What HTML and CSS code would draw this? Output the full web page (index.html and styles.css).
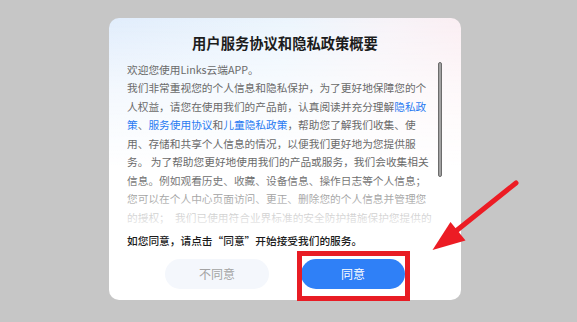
FILE: index.html
```html
<!DOCTYPE html>
<html lang="zh-CN">
<head>
<meta charset="utf-8">
<title>用户服务协议和隐私政策概要</title>
<link rel="stylesheet" href="styles.css">
</head>
<body>
<div class="stage">
  <div class="dialog">
    <h1 class="title">用户服务协议和隐私政策概要</h1>
    <div class="scroll">
      <p class="para">欢迎您使用Links云端APP。</p>
      <p class="para">我们非常重视您的个人信息和隐私保护，为了更好地保障您的个人权益，请您在使用我们的产品前，认真阅读并充分理解<a class="link">隐私政策</a>、<a class="link">服务使用协议</a>和<a class="link">儿童隐私政策</a>，帮助您了解我们收集、使用、存储和共享个人信息的情况，以便我们更好地为您提供服务。 为了帮助您更好地使用我们的产品或服务，我们会收集相关信息。例如观看历史、收藏、设备信息、操作日志等个人信息；您可以在个人中心页面访问、更正、删除您的个人信息并管理您的授权；　我们已使用符合业界标准的安全防护措施保护您提供的个人信息，防止数据遭到未经授权的访问、公开披露、使用、修改、损坏或丢失。</p>
      <div class="fade"></div>
    </div>
    <div class="scrollbar"></div>
    <p class="agree-note">如您同意，请点击“同意”开始接受我们的服务。</p>
    <div class="actions">
      <button class="btn btn-decline">不同意</button>
      <button class="btn btn-accept">同意</button>
    </div>
  </div>
  <div class="highlight"></div>
  <svg class="arrow" width="577" height="322" viewBox="0 0 577 322">
    <line x1="516" y1="183" x2="456" y2="231" stroke="#ec1c24" stroke-width="5" stroke-linecap="round"/>
    <polygon points="432.5,250 450.5,222 465.5,240.5" fill="#ec1c24"/>
  </svg>
</div>
</body>
</html>
```
FILE: styles.css
```css
* { box-sizing: border-box; }
html, body { margin: 0; padding: 0; }
body {
  background: #c6c6c6;
  font-family: "Noto Sans CJK SC", "Noto Sans", sans-serif;
  width: 577px;
  height: 322px;
  overflow: hidden;
}
.stage {
  position: relative;
  width: 577px;
  height: 322px;
  padding: 18px 0 0 109px;
}
.dialog {
  position: relative;
  width: 352px;
  border-radius: 10px;
  padding: 15px 18px 11.5px 18px;
  background:
    linear-gradient(to bottom, rgba(255,255,255,0) 0px, rgba(255,255,255,0.6) 70px, #fff 150px),
    linear-gradient(100deg, #e1edfc 0%, #ecf5fd 45%, #f7f3f8 70%, #fdebef 100%);
  display: flex;
  flex-direction: column;
}
.title {
  margin: 0;
  font-size: 14.3px;
  line-height: 20px;
  font-weight: 600;
  color: #1c1c1c;
  text-align: center;
}
.scroll {
  position: relative;
  margin-top: 7.75px;
  height: 167px;
  overflow: hidden;
  padding-right: 7px;
}
.para {
  margin: 0;
  font-size: 10.7px;
  line-height: 18.5px;
  color: #6a6a6a;
}
.link {
  color: #2a7bf2;
}
.fade {
  position: absolute;
  left: 0;
  right: 0;
  bottom: 0;
  height: 52px;
  background: linear-gradient(to bottom, rgba(255,255,255,0) 0%, rgba(255,255,255,0.55) 55%, rgba(255,255,255,0.9) 100%);
}
.scrollbar {
  position: absolute;
  left: 328.5px;
  top: 44px;
  width: 4.5px;
  height: 115px;
  border-radius: 3px;
  background: #a2a2a2;
  border: 1px solid #6c6c6c;
}
.agree-note {
  margin: 3.75px 0 0 0;
  font-size: 10.7px;
  line-height: 18.5px;
  color: #1a1a1a;
  font-weight: 500;
}
.actions {
  margin-top: 8.75px;
  display: flex;
  justify-content: center;
  gap: 32px;
}
.btn {
  width: 104px;
  height: 30px;
  border: none;
  border-radius: 15px;
  font-family: "Noto Sans CJK SC", "Noto Sans", sans-serif;
  font-size: 12px;
  padding: 0;
}
.btn-decline {
  background: #f4f7fc;
  color: #a3a3a3;
}
.btn-accept {
  background: #2f80f7;
  color: #ffffff;
}
.highlight {
  position: absolute;
  left: 297px;
  top: 251px;
  width: 113px;
  height: 50px;
  border: 5px solid #e81c24;
}
.arrow {
  position: absolute;
  left: 0;
  top: 0;
  pointer-events: none;
}
```
